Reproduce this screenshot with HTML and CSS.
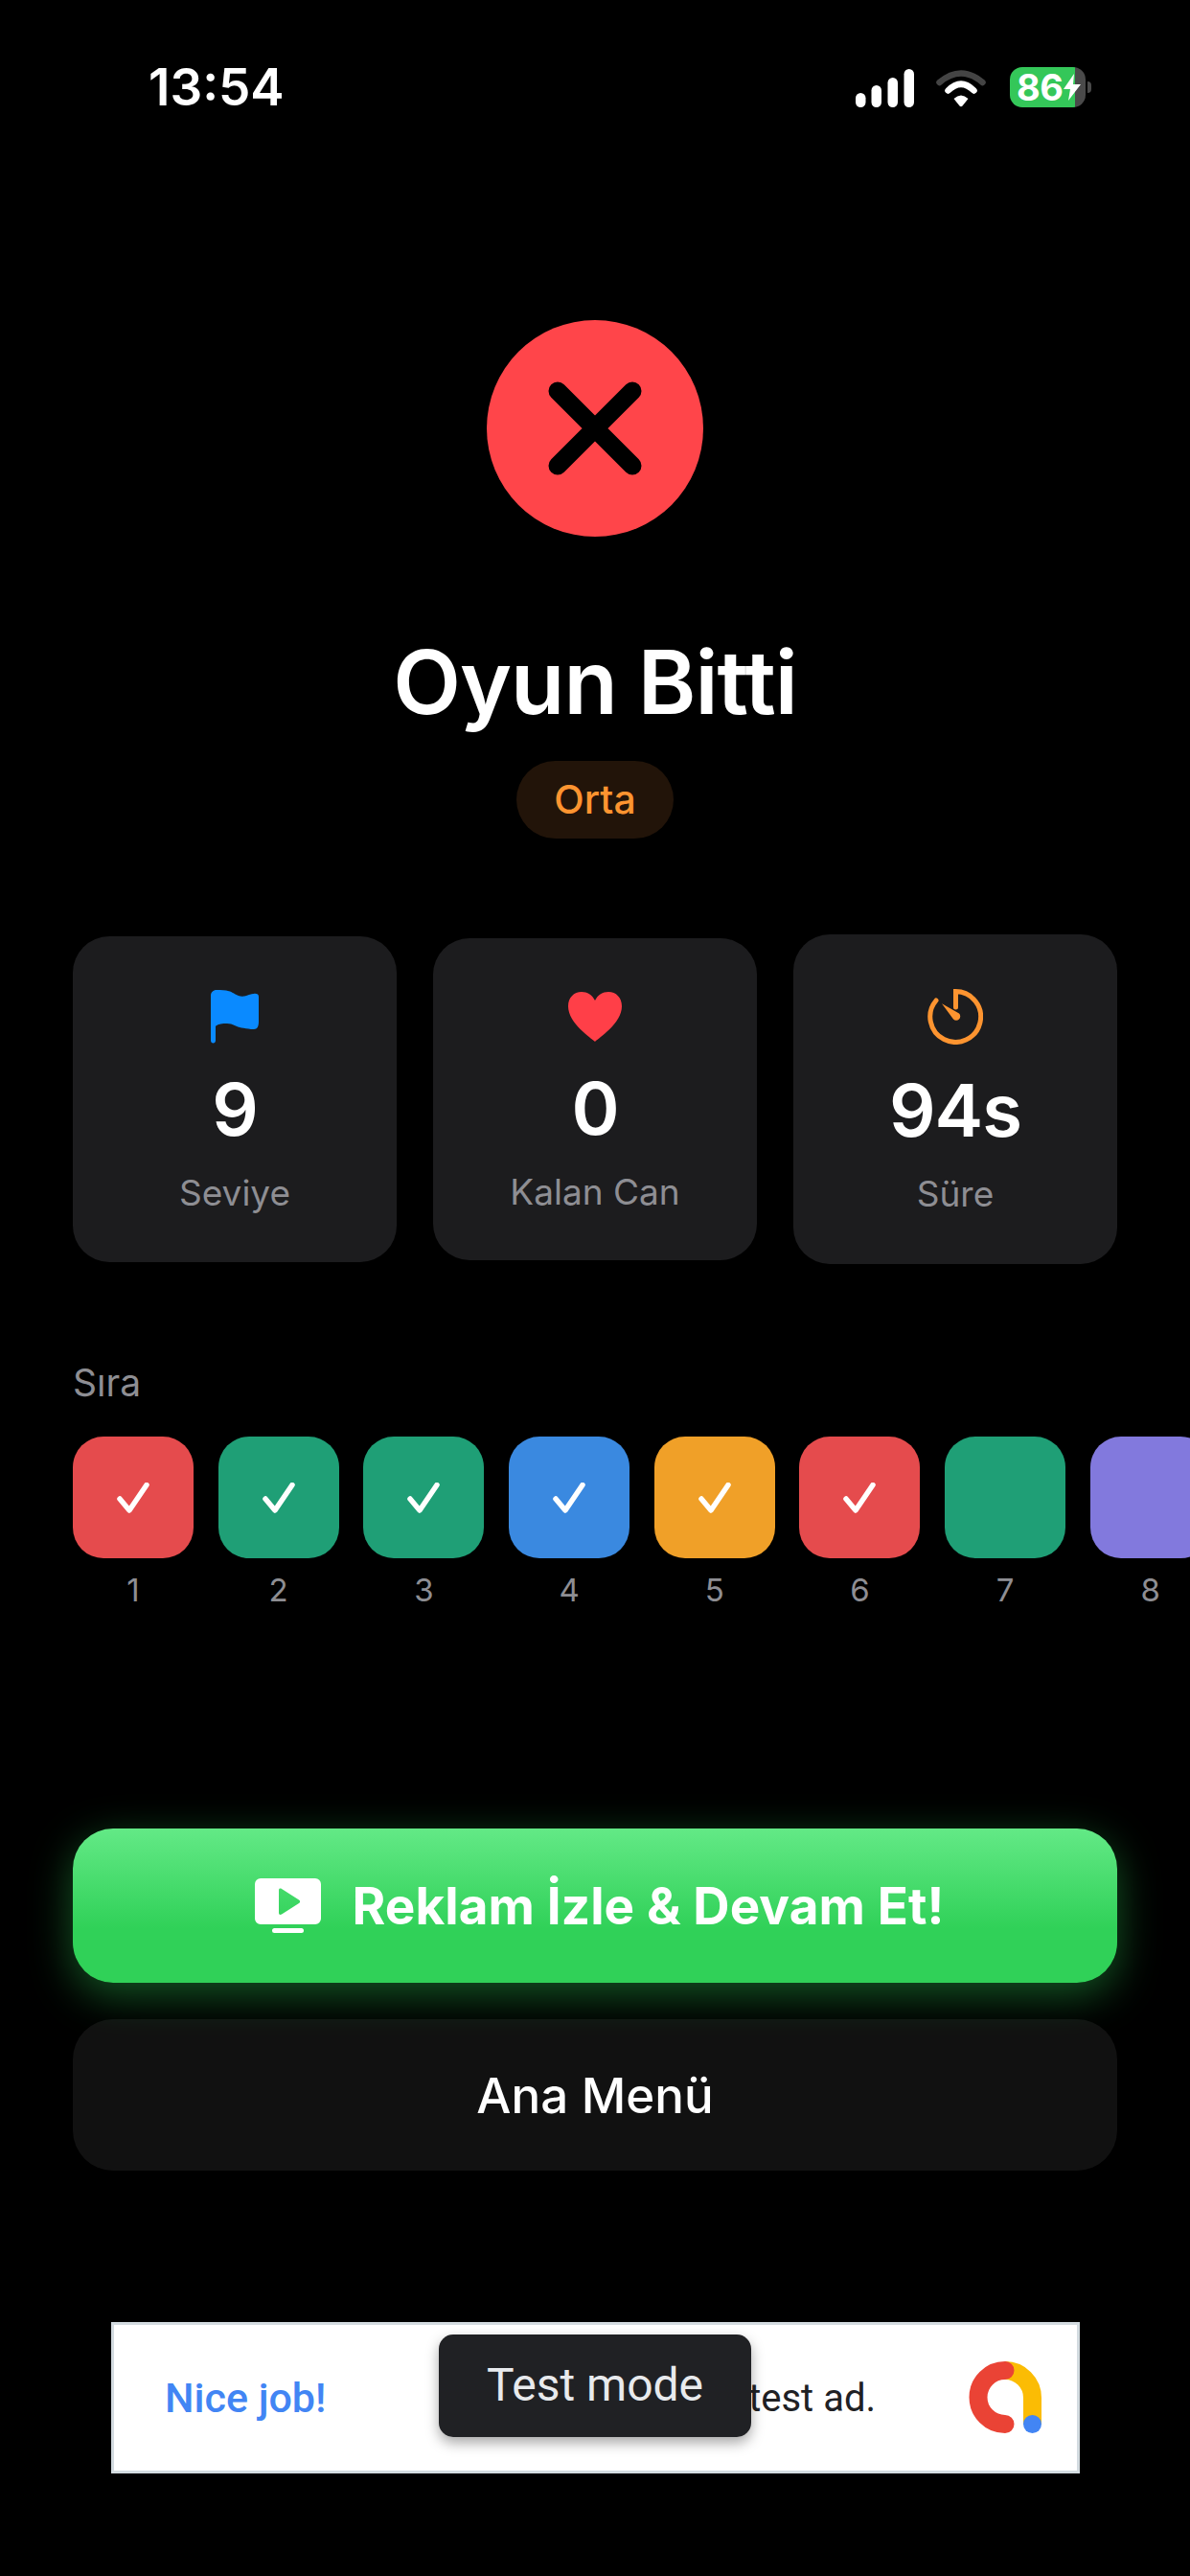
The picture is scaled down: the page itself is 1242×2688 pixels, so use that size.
FILE: index.html
```html
<!DOCTYPE html>
<html lang="tr">
<head>
<meta charset="utf-8">
<title>Oyun Bitti</title>
<link rel="stylesheet" href="styles.css">
</head>
<body>
<div class="screen">
  <header class="status">
    <span class="time">13:54</span>
    <div class="status-icons">
      <svg class="signal" width="61" height="40" viewBox="0 0 61 40"><rect x="0" y="25" width="10.500" height="15" rx="5.250" fill="#fff"/><rect x="16.500" y="17" width="10.500" height="23" rx="5.250" fill="#fff"/><rect x="33.500" y="9" width="10.500" height="31" rx="5.250" fill="#fff"/><rect x="50.500" y="0" width="10.500" height="40" rx="5.250" fill="#fff"/></svg>
      <svg class="wifi" width="52" height="40" viewBox="0 0 52 40"><path d="M3.500 14Q26 -5 48.500 14" fill="none" stroke="#444" stroke-width="6.500" stroke-linecap="round"/><path d="M12.500 22.500Q26 9 39.500 22.500" fill="none" stroke="#fff" stroke-width="6.500" stroke-linecap="round"/><path d="M18.500 31Q26 24 33.500 31L27.500 38.500Q26 40 24.500 38.500Z" fill="#fff"/></svg>
      <div class="battery">
        <span class="battery-level">86</span>
        <svg class="bolt" width="18" height="28" viewBox="0 0 18 28"><path d="M11 0L0 16H7L5 28L18 11H10Z" fill="#fff"/></svg>
      </div>
      <span class="battery-tip"></span>
    </div>
  </header>

  <main class="result">
    <div class="fail-badge">
      <svg width="226" height="226" viewBox="0 0 226 226"><path d="M74 74L152 152M152 74L74 152" fill="none" stroke="#000" stroke-width="19" stroke-linecap="round"/></svg>
    </div>
    <h1 class="title">Oyun Bitti</h1>
    <span class="difficulty">Orta</span>
  </main>

  <section class="stats">
    <div class="stat stat-level">
      <svg class="stat-icon" width="50" height="56" viewBox="0 0 50 56"><path d="M0 6C0 2.500 2.500 0 6 0C11 0 15 .2 19 1.200C24 2.500 27 6.700 33 6.700C38 6.700 41 3.800 46 3.800C48.500 3.800 50 5 50 7V33C50 38 48.500 41 45 41C40 41 37 40 32 39.500C27 38.800 23 35 17 35C12 35 8 35.500 5 37.700V52.500C5 54.200 4 55.500 2.500 55.500C1 55.500 0 54.200 0 52.500Z" fill="#0a8aff"/></svg>
      <span class="stat-value">9</span>
      <span class="stat-label">Seviye</span>
    </div>
    <div class="stat stat-lives">
      <svg class="stat-icon" width="56" height="52" viewBox="0 0 56 52"><path d="M28 52C24 48 0 33 0 15C0 6 6 0 14 0C20 0 25 3 28 9C31 3 36 0 42 0C50 0 56 6 56 15C56 33 32 48 28 52Z" fill="#ff3f48"/></svg>
      <span class="stat-value">0</span>
      <span class="stat-label">Kalan Can</span>
    </div>
    <div class="stat stat-time">
      <svg class="stat-icon" width="58" height="58" viewBox="0 0 58 58"><path d="M29.500 19V2.600A26.400 26.400 0 1 1 9 12" fill="none" stroke="#fd9430" stroke-width="5" stroke-linecap="round"/><path d="M15 15.200L33 25.500A4.200 4.200 0 0 1 27 31.500Z" fill="#fd9430"/></svg>
      <span class="stat-value">94s</span>
      <span class="stat-label">Süre</span>
    </div>
  </section>

  <section class="sequence">
    <h2 class="sequence-title">Sıra</h2>
    <div class="tiles">
      <div class="tile"><div class="tile-box red"><svg width="34" height="32" viewBox="0 0 34 32"><path d="M3 17L13 29L31 2.500" fill="none" stroke="#fff" stroke-width="5.500" stroke-linecap="round" stroke-linejoin="round"/></svg></div><span class="tile-num">1</span></div>
      <div class="tile"><div class="tile-box green"><svg width="34" height="32" viewBox="0 0 34 32"><path d="M3 17L13 29L31 2.500" fill="none" stroke="#fff" stroke-width="5.500" stroke-linecap="round" stroke-linejoin="round"/></svg></div><span class="tile-num">2</span></div>
      <div class="tile"><div class="tile-box green"><svg width="34" height="32" viewBox="0 0 34 32"><path d="M3 17L13 29L31 2.500" fill="none" stroke="#fff" stroke-width="5.500" stroke-linecap="round" stroke-linejoin="round"/></svg></div><span class="tile-num">3</span></div>
      <div class="tile"><div class="tile-box blue"><svg width="34" height="32" viewBox="0 0 34 32"><path d="M3 17L13 29L31 2.500" fill="none" stroke="#fff" stroke-width="5.500" stroke-linecap="round" stroke-linejoin="round"/></svg></div><span class="tile-num">4</span></div>
      <div class="tile"><div class="tile-box orange"><svg width="34" height="32" viewBox="0 0 34 32"><path d="M3 17L13 29L31 2.500" fill="none" stroke="#fff" stroke-width="5.500" stroke-linecap="round" stroke-linejoin="round"/></svg></div><span class="tile-num">5</span></div>
      <div class="tile"><div class="tile-box red"><svg width="34" height="32" viewBox="0 0 34 32"><path d="M3 17L13 29L31 2.500" fill="none" stroke="#fff" stroke-width="5.500" stroke-linecap="round" stroke-linejoin="round"/></svg></div><span class="tile-num">6</span></div>
      <div class="tile"><div class="tile-box green"></div><span class="tile-num">7</span></div>
      <div class="tile"><div class="tile-box purple"></div><span class="tile-num">8</span></div>
    </div>
  </section>

  <section class="actions">
    <button class="btn btn-primary">
      <svg width="69" height="57" viewBox="0 0 69 57"><path fill-rule="evenodd" d="M6 0H63A6 6 0 0 1 69 6V42A6 6 0 0 1 63 48H6A6 6 0 0 1 0 42V6A6 6 0 0 1 6 0ZM25 12.500V36C25 38 26.500 38.500 28 37.500L46 26C47.500 25 47.500 23.500 46 22.500L28 11C26.500 10 25 10.500 25 12.500Z" fill="#fff"/><rect x="18" y="52" width="33" height="5" rx="2.500" fill="#fff"/></svg>
      <span>Reklam İzle &amp; Devam Et!</span>
    </button>
    <button class="btn btn-secondary">Ana Menü</button>
  </section>

  <aside class="ad">
    <span class="ad-head">Nice job!</span>
    <span class="ad-text">This is a 320x50 test ad.</span>
    <svg class="ad-logo" width="76" height="75" viewBox="0 0 76 75"><path d="M38 9.500A28.500 28.500 0 0 1 66.500 38V66" fill="none" stroke="#fbbc04" stroke-width="19"/><circle cx="66.500" cy="65.500" r="9.500" fill="#4285f4"/><path d="M38 9.500A28 28 0 0 0 38 65.500" fill="none" stroke="#ea4335" stroke-width="19" stroke-linecap="round"/></svg>
    <div class="ad-toast">Test mode</div>
  </aside>
</div>
</body>
</html>
```
FILE: styles.css
```css
* { box-sizing: border-box; }
html, body { margin: 0; padding: 0; background: #000; }
.screen {
  width: 1242px;
  height: 2688px;
  overflow: hidden;
  background: #000;
  color: #fff;
  font-family: Inter, "Liberation Sans", sans-serif;
}

/* status bar */
.status {
  display: flex;
  justify-content: space-between;
  align-items: center;
  height: 42px;
  margin: 70px 0 222px;
  padding: 0 103px 0 155px;
}
.time { font-size: 53px; font-weight: 600; line-height: 42px; }
.status-icons { display: flex; align-items: center; }
.signal { margin-top: 2px; margin-right: 23px; }
.wifi { margin-top: 2px; margin-right: 25px; }
.battery {
  display: flex;
  align-items: center;
  width: 79px;
  height: 42px;
  padding-left: 7px;
  border-radius: 13px;
  background: linear-gradient(90deg, #34c759 86%, #4a4a4a 86%);
}
.battery-level { flex: none; font-size: 38px; font-weight: 700; line-height: 42px; width: 49px; letter-spacing: -.5px; }
.bolt { flex: none; }
.battery-tip {
  width: 4px;
  height: 12px;
  margin-left: 2px;
  border-radius: 0 6px 6px 0;
  background: #4a4a4a;
}

/* result heading */
.result { display: flex; flex-direction: column; align-items: center; }
.fail-badge { width: 226px; height: 226px; border-radius: 50%; background: #ff454a; }
.fail-badge svg { display: block; }
.title {
  margin: 102px 0 32px;
  font-size: 92px;
  font-weight: 600;
  line-height: 100px;
  letter-spacing: -1px;
}
.difficulty {
  width: 164px;
  height: 81px;
  border-radius: 41px;
  background: #221409;
  color: #fd9430;
  font-size: 41px;
  font-weight: 500;
  line-height: 81px;
  text-align: center;
}

/* stat cards */
.stats {
  display: flex;
  align-items: center;
  gap: 38px;
  height: 344px;
  margin-top: 100px;
  padding: 0 76px;
}
.stat {
  flex: 1;
  display: flex;
  flex-direction: column;
  align-items: center;
  border-radius: 38px;
  background: #1c1c1e;
}
.stat-level { height: 340px; padding-top: 56px; }
.stat-lives { height: 336px; padding-top: 56px; }
.stat-time { height: 344px; padding-top: 57px; }
.stat-icon { display: block; }
.stat-lives .stat-icon { margin-bottom: 1px; }
.stat-value {
  margin-top: 23px;
  font-size: 76px;
  font-weight: 600;
  line-height: 90px;
  letter-spacing: -1px;
}
.stat-label {
  margin-top: 21px;
  color: #8e8e93;
  font-size: 37px;
  line-height: 44px;
}

/* sequence */
.sequence { margin-top: 101px; }
.sequence-title {
  margin: 0 0 33px 76px;
  color: #8e8e93;
  font-size: 39px;
  font-weight: 400;
  line-height: 46px;
}
.tiles {
  display: flex;
  gap: 25.700px;
  overflow: hidden;
  padding-left: 76px;
}
.tile {
  flex: none;
  display: flex;
  flex-direction: column;
  align-items: center;
  width: 126px;
}
.tile-box {
  display: flex;
  align-items: center;
  justify-content: center;
  width: 126px;
  height: 127px;
  border-radius: 32px;
}
.tile-num {
  margin-top: 13px;
  color: #8e8e93;
  font-size: 33px;
  line-height: 40px;
}
.red { background: #e54b4d; }
.green { background: #1f9f76; }
.blue { background: #3a89e0; }
.orange { background: #f0a028; }
.purple { background: #8279dd; }

/* buttons */
.actions {
  display: flex;
  flex-direction: column;
  gap: 38px;
  margin-top: 229px;
  padding: 0 76px;
}
.btn {
  display: flex;
  align-items: center;
  justify-content: center;
  width: 100%;
  border: 0;
  border-radius: 42px;
  color: #fff;
  font-family: inherit;
}
.btn-primary {
  gap: 32.500px;
  height: 161px;
  padding: 0 0 0 9.500px;
  background: linear-gradient(180deg, #63e986 0%, #30d158 65%);
  box-shadow: 0 12px 44px rgba(48, 209, 88, .42);
  font-size: 53px;
  font-weight: 700;
  letter-spacing: .1px;
}
.btn-secondary {
  height: 158px;
  background: rgba(255, 255, 255, .066);
  font-size: 51px;
  font-weight: 500;
}

/* test ad */
.ad {
  position: relative;
  display: flex;
  align-items: center;
  width: 1011px;
  height: 158px;
  margin: 158px 0 0 116px;
  padding-left: 53px;
  border: 3px solid #d3dbe0;
  background: #fff;
  font-family: Roboto, "Liberation Sans", sans-serif;
}
.ad-head { color: #4285f4; font-size: 43px; font-weight: 500; }
.ad-text {
  position: absolute;
  right: 210px;
  top: 50%;
  transform: translateY(-50%);
  color: #202124;
  font-size: 40px;
  white-space: nowrap;
}
.ad-logo { position: absolute; right: 37px; top: 38px; }
.ad-toast {
  position: absolute;
  left: 339px;
  top: 10px;
  width: 326px;
  height: 107px;
  border-radius: 15px;
  background: #202124;
  box-shadow: 0 6px 14px rgba(0, 0, 0, .35);
  color: #e8eaed;
  font-size: 48px;
  line-height: 106px;
  text-align: center;
}
```
